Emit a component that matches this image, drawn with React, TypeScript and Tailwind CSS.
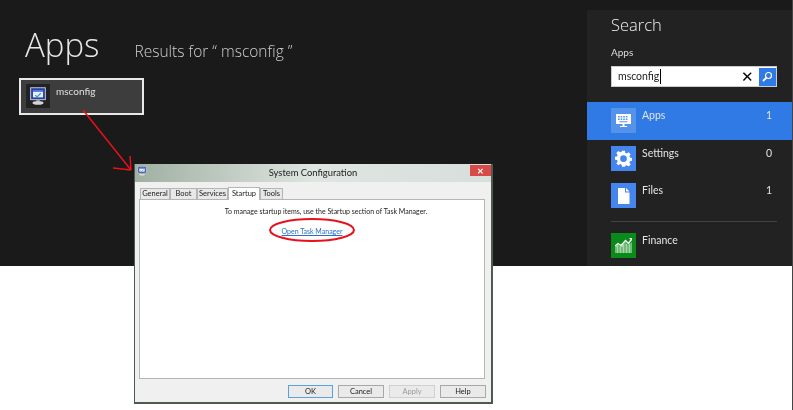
const heading = "font-['Open_Sans','Noto_Sans',sans-serif]";
const ui = "font-['Lato','Noto_Sans',sans-serif]";

function MonitorIcon({ size }: { size: number }) {
  return (
    <svg width={size} height={size} viewBox="0 0 24 24">
      <rect x="4" y="3" width="16" height="13" fill="#2a3f9e" stroke="#c9d2ea" strokeWidth="1" />
      <rect x="6.5" y="5.5" width="11" height="8" fill="#e8eefc" />
      <rect x="6.5" y="5.5" width="11" height="2" fill="#4a78d8" />
      <path d="M9 11l2 2 4-4" fill="none" stroke="#2a9fd8" strokeWidth="1.2" />
      <rect x="10" y="16" width="4" height="2" fill="#9a9a9a" />
      <ellipse cx="12" cy="19.5" rx="6" ry="2" fill="#d4d4d4" />
    </svg>
  );
}

function AppsGlyph() {
  return (
    <svg width="17" height="17" viewBox="0 0 17 17" fill="#fff">
      <path fillRule="evenodd" d="M1 2h15v10H1zM3 4v1.5h1.6V4zm2.6 0v1.5h1.6V4zm2.6 0v1.5h1.6V4zm2.6 0v1.5h1.6V4zm-7.8 2.6v1.5h1.6V6.600zm2.6 0v1.5h1.600V6.600zm2.6 0v1.5h1.600V6.600zm2.600 0v1.5h1.600V6.600zM4.500 9.200v1h8v-1z" />
      <path d="M7.500 12h2v2h2.500v1H5v-1h2.500z" />
    </svg>
  );
}

function GearGlyph() {
  return (
    <svg width="17" height="17" viewBox="0 0 24 24" fill="#fff">
      <path fillRule="evenodd" d="M10 1h4l.6 3.200 2 .8L19.300 3.200l2.800 2.800-1.800 2.700.8 2 3.100.6v4l-3.100.6-.8 2 1.800 2.700-2.800 2.800-2.700-1.800-2 .8L14 23.800h-4l-.6-3.100-2-.8-2.700 1.800-2.800-2.800 1.800-2.700-.8-2L0 13.600v-4l2.900-.6.800-2L1.900 4.300 4.700 1.500l2.700 1.800 2-.8zM12 7.500a4.700 4.700 0 1 0 0 9.400 4.700 4.700 0 0 0 0-9.400z" />
    </svg>
  );
}

function FileGlyph() {
  return (
    <svg width="13" height="16" viewBox="0 0 13 16" fill="#fff">
      <path d="M1 0h7v4.500h4.500V16H1zM9 0l3.500 3.500H9z" />
    </svg>
  );
}

function FinanceGlyph() {
  return (
    <svg width="17" height="15" viewBox="0 0 17 15">
      <path d="M0 15V9l3-2.500 3 2 4-4.500 3 3 4-3v11z" fill="#a8d8a8" />
      <path d="M1 15V9M4 15V7M7 15V9M10 15V5M13 15V7M16 15V4" stroke="#0b8a1c" strokeWidth=".7" />
      <path d="M0 8l3-2.500 3 2 4.500-5 3 3L16 2" fill="none" stroke="#fff" strokeWidth="1.300" />
      <path d="M14 0h3v3z" fill="#fff" />
    </svg>
  );
}

function CharmRow({ icon, iconBg, label, count, active }: { icon: React.ReactNode; iconBg: string; label: string; count?: string; active?: boolean }) {
  return (
    <div className={`flex h-[37.5px] shrink-0 items-center pl-[24px] pr-[20px] ${active ? "bg-[#2f7ae5]" : ""}`}>
      <div className={`flex h-[25px] w-[25px] shrink-0 items-center justify-center ${iconBg}`}>{icon}</div>
      <div className="flex h-[25px] flex-1 items-start justify-between pl-[6px] text-[10.5px] leading-[14px] text-[#e4e4e4]">
        <span>{label}</span>
        {count && <span>{count}</span>}
      </div>
    </div>
  );
}

function DialogTab({ label, width, active }: { label: string; width: string; active?: boolean }) {
  return (
    <div className={`flex items-center justify-center border border-b-0 border-[#b5b5b5] ${width} ${active ? "relative z-10 -mb-px h-[13px] bg-white" : "h-[11px] bg-[#e8e8e8]"}`}>
      {label}
    </div>
  );
}

function DialogButton({ label, width, variant }: { label: string; width: string; variant?: "default" | "disabled" }) {
  const look = variant === "default" ? "border-[#5aa2dc]" : variant === "disabled" ? "border-[#d0d0d0] text-[#9a9a9a]" : "border-[#a8a8a8]";
  return <div className={`flex h-[13px] items-center justify-center border bg-[#eaeaea] ${width} ${look}`}>{label}</div>;
}

export default function App() {
  return (
    <div className={`relative h-[410px] w-[793px] overflow-hidden border-r border-[#444] bg-white ${ui} blur-[0.4px]`}>
      <div className="flex h-[266px] bg-[#1a1a1a]">
        <div className="w-[587px] shrink-0 pl-[19px] pt-[24px]">
          <div className={`flex items-baseline pl-[6px] ${heading}`}>
            <span className="text-[33px] font-light leading-[42px] text-[#e8e8e8]">Apps</span>
            <span className="ml-[35px] text-[15.5px] font-light text-[#cfcfcf]">Results for “ msconfig ”</span>
          </div>
          <div className="mt-[12px] flex h-[37px] w-[125px] border-2 border-[#e8e8e8] bg-[#3d3d3d] pl-[5px] pt-[4px]">
            <div className="flex h-[24px] w-[24px] items-center justify-center bg-[#222]">
              <MonitorIcon size={22} />
            </div>
            <span className="pl-[6px] text-[10px] leading-[14px] text-[#e0e0e0]">msconfig</span>
          </div>
        </div>

        <div className="mt-[10px] flex w-[205px] flex-col bg-[#222222]">
          <div className="pl-[24px] pr-[15px]">
            <div className={`pt-[1px] text-[16.5px] font-light leading-[27px] text-[#eeeeee] ${heading}`}>Search</div>
            <div className="mt-[7px] text-[10px] leading-[14px] text-[#dddddd]">Apps</div>
            <div className="mt-[7px] flex h-[21px] items-center border border-[#cccccc] bg-white pl-[6px]">
              <span className="border-r border-black pr-px text-[10.5px] text-[#222]">msconfig</span>
              <span className="ml-auto pr-[5px] text-[15px] leading-none text-black">✕</span>
              <div className="flex h-[18px] w-[17px] items-center justify-center bg-[#2f7ae5]">
                <svg width="11" height="11" viewBox="0 0 11 11" fill="none" stroke="#fff" strokeWidth="1.200">
                  <circle cx="6.500" cy="4.500" r="3" />
                  <path d="M4.200 6.800L1 10" strokeWidth="1.800" />
                </svg>
              </div>
            </div>
          </div>
          <div className="mt-[15px] flex flex-col">
            <CharmRow active icon={<AppsGlyph />} iconBg="bg-[#5592ea]" label="Apps" count="1" />
            <CharmRow icon={<GearGlyph />} iconBg="bg-[#4586ee]" label="Settings" count="0" />
            <CharmRow icon={<FileGlyph />} iconBg="bg-[#4586ee]" label="Files" count="1" />
          </div>
          <div className="ml-[24px] mr-[15px] mt-[6px] border-t border-[#444444]" />
          <div className="mt-[5px]">
            <CharmRow icon={<FinanceGlyph />} iconBg="bg-[#0b8a1c]" label="Finance" />
          </div>
        </div>
      </div>

      {/* msconfig window sits on top of the start screen */}
      <div className="absolute left-[134px] top-[164px] flex h-[240px] w-[359px] flex-col border-r-2 border-b-2 border-l border-[#4d5a50] bg-[#f0f0f0] text-[7.5px] leading-none text-[#222]">
        <div className="relative flex h-[18px] shrink-0 items-center justify-center bg-gradient-to-r from-[#9fb0a2] via-[#dfe5e1] to-[#d8dedb]">
          <div className="absolute left-[1px] top-[1px]">
            <MonitorIcon size={12} />
          </div>
          <span className="text-[9.4px] text-[#222]">System Configuration</span>
          <div className="absolute right-0 top-[1px] flex h-[11px] w-[21px] items-center justify-center bg-[#d84a48] text-[8px] font-bold text-white">✕</div>
        </div>
        <div className="flex shrink-0 items-end pl-[5px] pt-[5px]">
          <DialogTab label="General" width="w-[30px]" />
          <DialogTab label="Boot" width="w-[27px]" />
          <DialogTab label="Services" width="w-[31px]" />
          <DialogTab label="Startup" width="w-[32px]" active />
          <DialogTab label="Tools" width="w-[23px]" />
        </div>
        <div className="ml-[4px] mr-[6px] flex h-[180px] shrink-0 flex-col items-center border border-[#b5b5b5] bg-white pt-[6px]">
          <div className="ml-[28px] text-[7px] leading-[10px]">To manage startup items, use the Startup section of Task Manager.</div>
          <div className="mt-[10px] text-[7px] leading-[10px] text-[#2a6fc9] underline">Open Task Manager</div>
        </div>
        <div className="flex justify-end gap-[5px] pr-[5px] pt-[6px]">
          <DialogButton label="OK" width="w-[45px]" variant="default" />
          <DialogButton label="Cancel" width="w-[46px]" />
          <DialogButton label="Apply" width="w-[46px]" variant="disabled" />
          <DialogButton label="Help" width="w-[46px]" />
        </div>
      </div>

      {/* red annotation drawn over the screenshot */}
      <svg className="absolute left-0 top-0" width="793" height="410" fill="none" stroke="#e8101c" strokeWidth="1.500">
        <path d="M83 110L131 170M130 156L131 170M113 168L131 170" />
        <ellipse cx="312" cy="230" rx="42" ry="11" strokeWidth="2" />
      </svg>
    </div>
  );
}
